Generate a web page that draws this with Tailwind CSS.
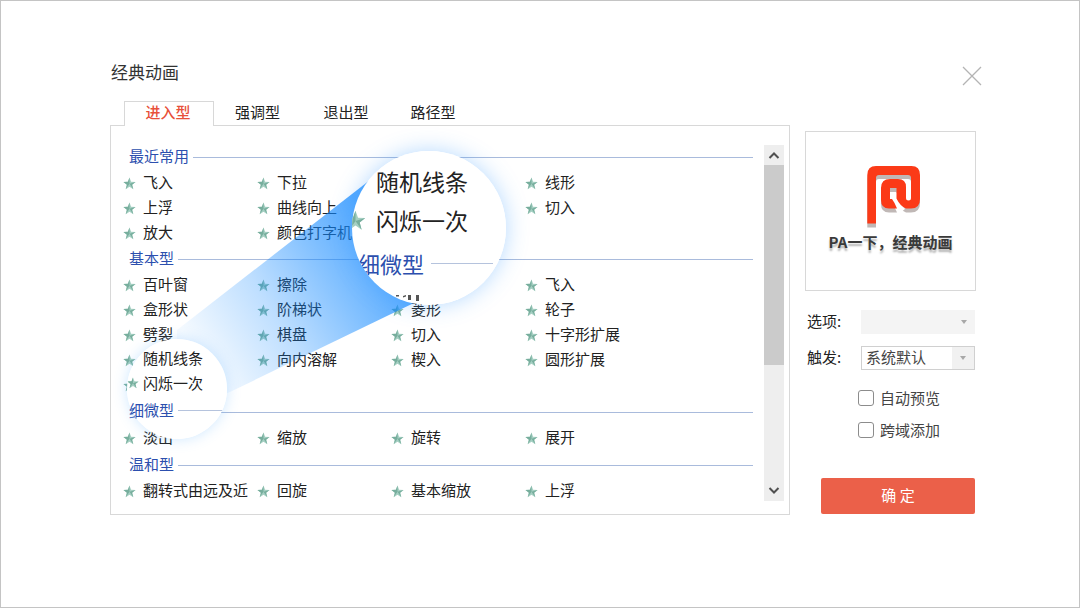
<!DOCTYPE html>
<html lang="zh-CN">
<head>
<meta charset="utf-8">
<meta name="viewport" content="width=device-width, initial-scale=1">
<title>经典动画</title>
<script src="https://cdn.jsdelivr.net/npm/@tailwindcss/browser@4"></script>
</head>
<body class="min-h-screen bg-white border border-[#c4c4c4] font-['Noto_Sans_CJK_SC','Noto_Sans',sans-serif] text-[15px] leading-6 text-[#222]">
<svg class="hidden" aria-hidden="true">
  <symbol id="star" viewBox="0 0 14 14">
    <path d="M7 0.5 8.7 5.1 13.5 5.3 9.8 8.3 11.1 13.2 7 10.4 2.9 13.2 4.2 8.3 0.5 5.3 5.3 5.1Z" fill="#a5cfc2"/>
    <path d="M7 0.5V7.4L2.9 13.2 4.2 8.3 0.5 5.3 5.3 5.1ZM7 7.4 13.5 5.3 9.8 8.3 11.1 13.2Z" fill="#77ae9d"/>
  </symbol>
</svg>
<header class="flex items-center justify-between pt-[59px] pl-[110px] pr-[97px]">
  <h1 class="pb-[3px] text-[17px] leading-6 text-[#333]">经典动画</h1>
  <button type="button" aria-label="关闭" class="mt-1 size-[20px]">
    <svg viewBox="0 0 20 20" class="size-[20px]" fill="none" stroke="#b4b4b4" stroke-width="1.3"><path d="M1 1 19 19M19 1 1 19"/></svg>
  </button>
</header>
<main class="flex items-start gap-[15px] pt-[14px] pl-[109px] pr-[103px]">
  <section class="min-w-0 flex-1">
    <nav role="tablist" class="relative z-10 -mb-px flex h-[25px] pl-[14px]">
      <button role="tab" aria-selected="true" type="button" class="w-[90px] border border-b-0 border-[#d8d8d8] bg-white pr-[2px] pb-1 text-center font-medium leading-5 text-[#e8503a]">进入型</button>
      <button role="tab" type="button" class="w-[87px] pb-1 text-center leading-5">强调型</button>
      <button role="tab" type="button" class="w-[90px] pb-1 text-center leading-5">退出型</button>
      <button role="tab" type="button" class="w-[84px] pb-1 text-center leading-5">路径型</button>
    </nav>
    <div class="flex justify-between border border-[#d8d8d8] pt-[18px] pb-[10px] pl-3 pr-[6px]">
      <div class="relative min-w-0 flex-1">
        <div id="list"></div>
        <svg class="pointer-events-none absolute top-0 left-0 h-[370px] w-[400px] overflow-visible" viewBox="123 144 400 370" aria-hidden="true">
          <defs>
            <linearGradient id="beam" gradientUnits="userSpaceOnUse" x1="205" y1="367" x2="388" y2="252">
              <stop offset="0" stop-color="#0f87ff" stop-opacity="0.04"/>
              <stop offset="0.4" stop-color="#0f87ff" stop-opacity="0.27"/>
              <stop offset="0.75" stop-color="#0f87ff" stop-opacity="0.54"/>
              <stop offset="1" stop-color="#0f87ff" stop-opacity="0.72"/>
            </linearGradient>
          </defs>
          <path d="M370 180 177 330 177 415 232 391 418 301Z" fill="url(#beam)"/>
        </svg>
        <div aria-hidden="true" class="absolute top-[195px] left-[4px] size-[100px] rounded-full shadow-[0_0_14px_rgba(90,175,255,0.3)]">
          <div class="flex size-full flex-col overflow-hidden rounded-full bg-white pt-[6px] pl-[16px]">
            <span class="whitespace-nowrap leading-[25px]">随机线条</span>
            <span class="-ml-[16px] flex items-center gap-[4px] whitespace-nowrap leading-[25px]"><svg class="size-[12px] shrink-0"><use href="#star"/></svg>闪烁一次</span>
            <span class="-ml-[14px] flex items-center gap-1 whitespace-nowrap leading-[30px] text-[#2c4fae]">细微型<i class="mt-px mr-1 h-px flex-1 bg-[#b5c3dd]"></i></span>
          </div>
        </div>
        <div aria-hidden="true" class="absolute top-[7px] left-[229px] size-[154px] rounded-full shadow-[0_0_22px_rgba(60,155,255,0.38)]">
          <div class="relative size-full overflow-hidden rounded-full bg-white text-[23px]">
            <div class="flex flex-col pl-[24px] pt-[11px]">
              <span class="whitespace-nowrap leading-[39px]">随机线条</span>
              <span class="-ml-[31px] flex items-center gap-[10px] whitespace-nowrap leading-[39px]"><svg class="size-[21px] shrink-0"><use href="#star"/></svg>闪烁一次</span>
              <span class="-ml-[18px] flex items-center gap-[7px] whitespace-nowrap pr-[13px] text-[22px] leading-[46px] text-[#2c4fae]">细微型<i class="h-px flex-1 bg-[#b5c3dd]"></i></span>
            </div>
            <svg viewBox="0 0 28 8" class="absolute bottom-[3px] left-[43px] h-2 w-7" fill="#555"><path d="M1 1H4V2.5H1ZM8 2 11 1V2.5L8 3.5ZM13 1H16V6H13ZM21 1H24V7H21Z"/></svg>
          </div>
        </div>
      </div>
      <div class="ml-[11px] mt-px -mr-px flex h-[356px] w-[20px] flex-col bg-[#eeeeee]">
        <button type="button" aria-label="向上滚动" class="flex h-[20px] items-center justify-center"><svg viewBox="0 0 12 8" class="h-2 w-3" fill="none" stroke="#505050" stroke-width="2"><path d="M1.5 7 6 2.5 10.5 7"/></svg></button>
        <div class="h-[200px] bg-[#cbcbcb]"></div>
        <button type="button" aria-label="向下滚动" class="mt-auto flex h-[20px] items-center justify-center"><svg viewBox="0 0 12 8" class="h-2 w-3" fill="none" stroke="#505050" stroke-width="2"><path d="M1.5 1 6 5.5 10.5 1"/></svg></button>
      </div>
    </div>
  </section>
  <aside class="mt-[30px] w-[171px] shrink-0">
    <figure class="flex h-[160px] flex-col items-center border border-[#d8d8d8] pt-[30px]">
      <svg viewBox="-3 0 60 66" class="h-[66px] w-[60px] shrink-0" aria-hidden="true">
        <defs>
          <path id="mark" d="M3.3 61.5V13Q3.3 4 12 4H47.5Q56 4 56 13V37Q56 46.5 47 46.5H42Q36 44 32.5 36.5V26H26V37H28Q31 41 33 46.5H25Q17 46.5 17 38V26Q17 17 26 17H34Q42 17 42 25V36Q42 38.5 44.5 38.5 47 38.5 47 36V16Q47 13 44 13H15Q12 13 12 16V61.5Z"/>
        </defs>
        <use href="#mark" y="4" fill="#c0b8b6"/>
        <path d="M26 31H33V37L41 47 36 51 26 38Z" fill="#fff"/>
        <use href="#mark" fill="#fb3a17"/>
      </svg>
      <figcaption class="mt-[2px] whitespace-nowrap font-bold text-[#3a3a3a] text-shadow-[0_3px_2px_rgba(0,0,0,0.3)]">PA一下，经典动画</figcaption>
    </figure>
    <form class="flex flex-col">
      <div class="mt-[18px] flex items-center justify-between pl-[2px] pr-px">
        <label for="option" class="pb-[2px]">选项:</label>
        <div class="relative">
          <select id="option" disabled class="block h-[24px] w-[114px] appearance-none bg-[#f4f4f4]"><option></option></select>
          <i class="pointer-events-none absolute top-[10px] right-[8px] border-x-3 border-t-4 border-x-transparent border-t-[#a8a8a8]"></i>
        </div>
      </div>
      <div class="mt-[10px] flex items-center justify-between pl-[2px] pr-px">
        <label for="trigger" class="pb-[2px]">触发:</label>
        <div class="relative">
          <select id="trigger" class="block h-[24px] w-[114px] appearance-none border border-[#d0d0d0] bg-white pb-[2px] pl-1 leading-5 text-[#444]"><option>系统默认</option></select>
          <span class="pointer-events-none absolute top-px right-px flex h-[22px] w-[22px] items-center justify-center bg-[#f1f1f1]"><i class="border-x-3 border-t-4 border-x-transparent border-t-[#a8a8a8]"></i></span>
        </div>
      </div>
      <label class="mt-[15px] ml-[53px] flex h-[24px] items-center gap-[6px] text-[#444]"><input type="checkbox" class="size-[16px] appearance-none rounded-[3px] border border-[#8c8c8c] bg-white">自动预览</label>
      <label class="mt-2 ml-[53px] flex h-[24px] items-center gap-[6px] text-[#444]"><input type="checkbox" class="size-[16px] appearance-none rounded-[3px] border border-[#8c8c8c] bg-white">跨域添加</label>
      <button type="button" class="mt-[36px] ml-[16px] mr-px h-[36px] rounded-[2px] bg-[#eb6049] pb-[2px] text-white">确 定</button>
    </form>
  </aside>
</main>
<script>
const groups = [
  ['最近常用', 'h-[27px]', [['飞入','下拉','','线形'],['上浮','曲线向上','','切入'],['放大','颜色打字机','','']]],
  ['基本型', 'h-[27px]', [['百叶窗','擦除','','飞入'],['盒形状','阶梯状','菱形','轮子'],['劈裂','棋盘','切入','十字形扩展'],['随机线条','向内溶解','楔入','圆形扩展'],['闪烁一次','','','']]],
  ['细微型', 'h-[28px]', [['淡出','缩放','旋转','展开']]],
  ['温和型', 'h-[28px]', [['翻转式由远及近','回旋','基本缩放','上浮']]]
];
const item = t => t ? `<button type="button" class="flex items-center gap-[7px] whitespace-nowrap"><svg class="size-[13px] shrink-0"><use href="#star"/></svg><span class="pb-[3px] leading-[22px]">${t}</span></button>` : '<span></span>';
document.getElementById('list').innerHTML = groups.map(([name, h, rows]) =>
  `<section><h2 class="flex ${h} items-center gap-1 pl-[6px] text-[#2c4fae]"><span class="pb-[3px] leading-[22px]">${name}</span><i class="h-px flex-1 bg-[#a9bbdc]"></i></h2>
   <div class="grid auto-rows-[25px] grid-cols-[134px_134px_134px_1fr]">${rows.flat().map(item).join('')}</div></section>`).join('');
</script>
</body>
</html>
